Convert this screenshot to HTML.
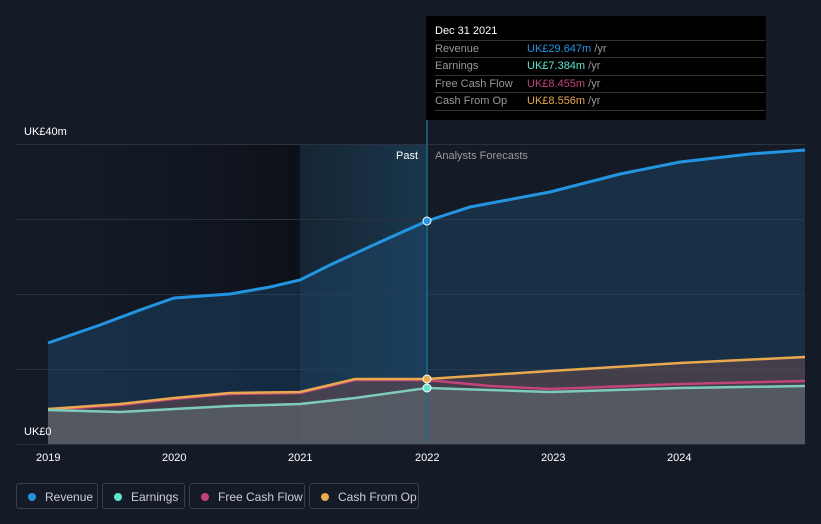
<!DOCTYPE html><html><head><style>
body{margin:0;width:821px;height:524px;background:#151b26;font-family:"Liberation Sans",sans-serif;overflow:hidden;position:relative}
.t{position:absolute;color:#fff;font-size:11px}
.leg{position:absolute;top:483px;height:26px;border:1px solid #3a404b;border-radius:3px;color:#ccd;font-size:12px;line-height:26px;box-sizing:border-box;padding-left:28px}
.leg i{position:absolute;left:11px;top:9px;width:8px;height:8px;border-radius:50%}
.tip{position:absolute;left:426px;top:16px;width:340px;height:104px;background:#000}
.row{position:absolute;left:9px;width:330px;border-top:1px solid #333;font-size:11px;color:#999;height:17px;line-height:17px}
.row span{position:absolute;left:92px}
</style></head><body>
<svg width="821" height="524" style="position:absolute;left:0;top:0">
<defs>
<linearGradient id="pf" x1="0" x2="1"><stop offset="0" stop-color="#0f1622" stop-opacity="0"/><stop offset="1" stop-color="#0c1018"/></linearGradient>
<linearGradient id="pb" x1="0" x2="1"><stop offset="0" stop-color="#1c4a66" stop-opacity="0.2"/><stop offset="1" stop-color="#1c4a66" stop-opacity="0.6"/></linearGradient>
</defs>
<rect x="48" y="144" width="252" height="300" fill="url(#pf)"/>
<rect x="300" y="144" width="127" height="300" fill="url(#pb)"/>
<g stroke="#2c323d" stroke-width="1">
<line x1="16" y1="144.5" x2="805" y2="144.5"/><line x1="16" y1="219.5" x2="805" y2="219.5"/><line x1="16" y1="294.5" x2="805" y2="294.5"/><line x1="16" y1="369.5" x2="805" y2="369.5"/><line x1="16" y1="444.5" x2="805" y2="444.5"/>
</g>
<path d="M48,343 L100,325 L140,310 L174,298 L230,294 L270,287 L300,280 L330,265 L380,242 L427,221 L470,207 L550,192 L620,174 L680,162 L750,154 L805,150 L805,444 L48,444Z" fill="#1d4a6e" opacity="0.45"/>
<path d="M48,409 L120,404 L174,398 L230,393 L300,392 L330,385 L355,379 L427,379 L550,371 L680,363 L805,357 L805,444 L48,444Z" fill="#6a4a50" opacity="0.55"/>
<path d="M48,410 L120,412 L174,409 L230,406 L300,404 L355,398 L427,388 L550,392 L680,388 L805,386 L805,444 L48,444Z" fill="#5a6168" opacity="0.75"/>
<line x1="427" y1="16" x2="427" y2="444" stroke="#1f6a8a" stroke-width="1.5"/>
<path d="M48,343 L100,325 L140,310 L174,298 L230,294 L270,287 L300,280 L330,265 L380,242 L427,221 L470,207 L550,192 L620,174 L680,162 L750,154 L805,150" fill="none" stroke="#2394df" stroke-width="3"/>
<path d="M48,410 L120,405 L174,399 L230,394 L300,393 L330,386 L355,380 L427,380 L490,386 L550,389 L680,384 L805,381" fill="none" stroke="#c0437a" stroke-width="2.5"/>
<path d="M48,409 L120,404 L174,398 L230,393 L300,392 L330,385 L355,379 L427,379 L550,371 L680,363 L805,357" fill="none" stroke="#e8a94f" stroke-width="2.5"/>
<path d="M48,410 L120,412 L174,409 L230,406 L300,404 L355,398 L427,388 L550,392 L680,388 L805,386" fill="none" stroke="#7fcbb9" stroke-width="2.5"/>
<circle cx="427" cy="221" r="4" fill="#2394df" stroke="#fff" stroke-width="1"/>
<circle cx="427" cy="379" r="4" fill="#e8a94f" stroke="#fff" stroke-width="1"/>
<circle cx="427" cy="388" r="4" fill="#5ee6d0" stroke="#fff" stroke-width="1"/>
</svg>
<div class="t" style="left:24px;top:126px">UK£40m</div>
<div class="t" style="left:24px;top:426px">UK£0</div>
<div class="t" style="left:396px;top:150px">Past</div>
<div class="t" style="left:435px;top:150px;color:#999">Analysts Forecasts</div>
<div class="t" style="left:36px;top:452px">2019</div>
<div class="t" style="left:162px;top:452px">2020</div>
<div class="t" style="left:288px;top:452px">2021</div>
<div class="t" style="left:415px;top:452px">2022</div>
<div class="t" style="left:541px;top:452px">2023</div>
<div class="t" style="left:667px;top:452px">2024</div>
<div class="tip">
<div class="t" style="left:9px;top:9px">Dec 31 2021</div>
<div class="row" style="top:24px">Revenue<span style="color:#2394df">UK£29.647m <b style="font-weight:normal;color:#999">/yr</b></span></div>
<div class="row" style="top:41px">Earnings<span style="color:#5ee6d0">UK£7.384m <b style="font-weight:normal;color:#999">/yr</b></span></div>
<div class="row" style="top:59px">Free Cash Flow<span style="color:#c0437a">UK£8.455m <b style="font-weight:normal;color:#999">/yr</b></span></div>
<div class="row" style="top:76px;border-bottom:1px solid #333">Cash From Op<span style="color:#e8a94f">UK£8.556m <b style="font-weight:normal;color:#999">/yr</b></span></div>
</div>
<div class="leg" style="left:16px;width:82px"><i style="background:#2394df"></i>Revenue</div>
<div class="leg" style="left:102px;width:83px"><i style="background:#5ee6d0"></i>Earnings</div>
<div class="leg" style="left:189px;width:116px"><i style="background:#c0437a"></i>Free Cash Flow</div>
<div class="leg" style="left:309px;width:110px"><i style="background:#e8a94f"></i>Cash From Op</div>
</body></html>
